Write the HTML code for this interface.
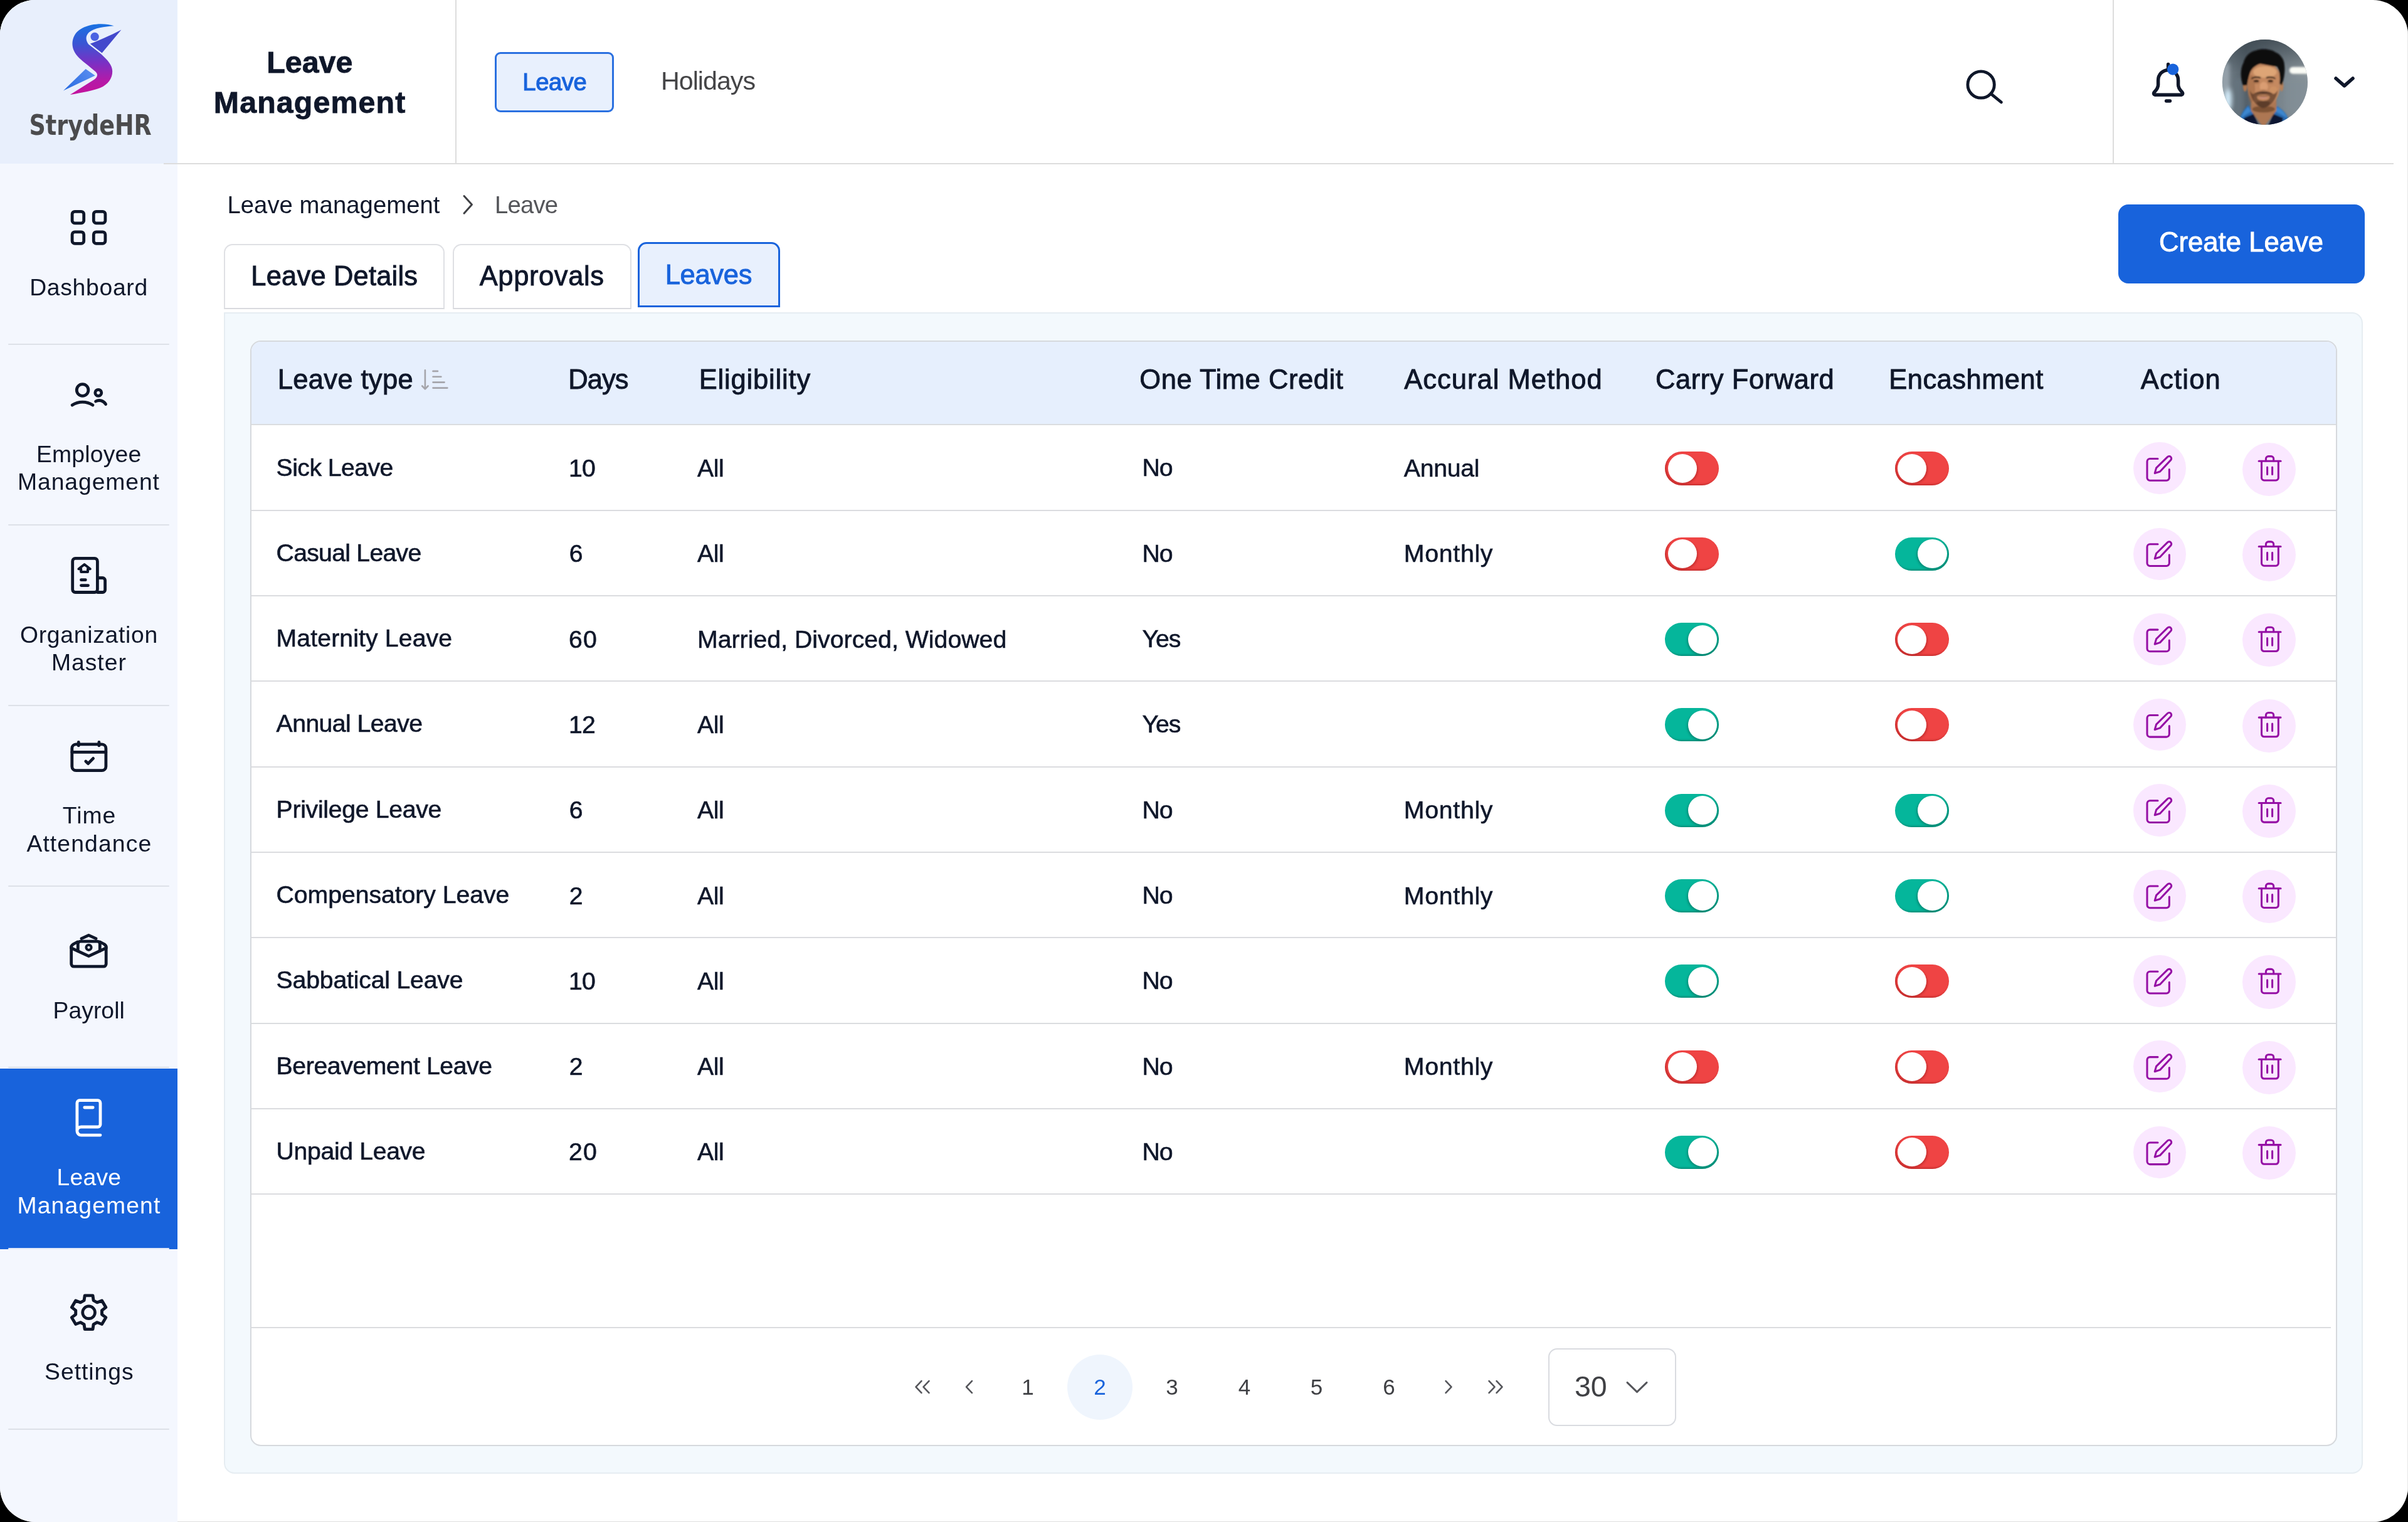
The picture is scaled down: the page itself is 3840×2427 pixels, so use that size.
<!DOCTYPE html>
<html lang="en"><head><meta charset="utf-8"><title>Leave Management</title>
<style>
*{box-sizing:border-box;margin:0;padding:0}
html,body{width:3840px;height:2427px;background:#000;overflow:hidden}
body{font-family:"Liberation Sans", sans-serif;-webkit-font-smoothing:antialiased}
#app{will-change:transform;position:absolute;left:0;top:0;width:3840px;height:2427px;background:#fff;border-radius:56px;overflow:hidden}
</style></head><body><div id="app">
<div style="position:absolute;left:0px;top:0px;width:283px;height:2427px;background:#f4f7fe;"></div>
<div style="position:absolute;left:0px;top:0px;width:283px;height:261px;background:#e8effc;"></div>
<div style="position:absolute;left:13px;top:1701px;width:257px;height:2px;background:#dde1e8;border-radius:1px;"></div>
<div style="position:absolute;left:0px;top:1703.5px;width:283px;height:288.5px;background:#1863dc;"></div>
<div style="position:absolute;left:13px;top:548px;width:257px;height:2px;background:#dde1e8;border-radius:1px;"></div>
<div style="position:absolute;left:13px;top:836px;width:257px;height:2px;background:#dde1e8;border-radius:1px;"></div>
<div style="position:absolute;left:13px;top:1124px;width:257px;height:2px;background:#dde1e8;border-radius:1px;"></div>
<div style="position:absolute;left:13px;top:1412px;width:257px;height:2px;background:#dde1e8;border-radius:1px;"></div>
<div style="position:absolute;left:13px;top:1989.5px;width:257px;height:2px;background:#e3eaf9;border-radius:1px;"></div>
<div style="position:absolute;left:13px;top:2278px;width:257px;height:2px;background:#dde1e8;border-radius:1px;"></div>
<div style="position:absolute;left:47.20px;top:435.50px;font-size:37.3px;line-height:44.76px;color:#0f172a;font-weight:400;white-space:nowrap;letter-spacing:0.691px;">Dashboard</div>
<div style="position:absolute;left:57.90px;top:701.50px;font-size:37.3px;line-height:44.76px;color:#0f172a;font-weight:400;white-space:nowrap;letter-spacing:0.218px;">Employee</div>
<div style="position:absolute;left:28.00px;top:746.10px;font-size:37.3px;line-height:44.76px;color:#0f172a;font-weight:400;white-space:nowrap;letter-spacing:0.920px;">Management</div>
<div style="position:absolute;left:32.00px;top:989.60px;font-size:37.3px;line-height:44.76px;color:#0f172a;font-weight:400;white-space:nowrap;letter-spacing:0.701px;">Organization</div>
<div style="position:absolute;left:81.90px;top:1034.20px;font-size:37.3px;line-height:44.76px;color:#0f172a;font-weight:400;white-space:nowrap;letter-spacing:1.002px;">Master</div>
<div style="position:absolute;left:99.80px;top:1277.90px;font-size:37.3px;line-height:44.76px;color:#0f172a;font-weight:400;white-space:nowrap;letter-spacing:0.967px;">Time</div>
<div style="position:absolute;left:42.40px;top:1322.50px;font-size:37.3px;line-height:44.76px;color:#0f172a;font-weight:400;white-space:nowrap;letter-spacing:1.118px;">Attendance</div>
<div style="position:absolute;left:84.50px;top:1588.80px;font-size:37.3px;line-height:44.76px;color:#0f172a;font-weight:400;white-space:nowrap;letter-spacing:0.046px;">Payroll</div>
<div style="position:absolute;left:90.50px;top:1855.30px;font-size:37.3px;line-height:44.76px;color:#fff;font-weight:400;white-space:nowrap;letter-spacing:0.239px;">Leave</div>
<div style="position:absolute;left:27.50px;top:1899.90px;font-size:37.3px;line-height:44.76px;color:#fff;font-weight:400;white-space:nowrap;letter-spacing:1.120px;">Management</div>
<div style="position:absolute;left:71.10px;top:2164.70px;font-size:37.3px;line-height:44.76px;color:#0f172a;font-weight:400;white-space:nowrap;letter-spacing:0.976px;">Settings</div>
<div style="position:absolute;left:143.9px;top:173.21px;font-size:45px;line-height:54px;color:#4b4b4d;font-weight:700;white-space:nowrap;transform:translateX(-50%) scaleX(.902);font-family:'DejaVu Sans Condensed','DejaVu Sans',sans-serif;font-stretch:condensed;">StrydeHR</div>
<div style="position:absolute;left:283px;top:2426px;width:3557px;height:1px;background:#dedede;"></div>
<div style="position:absolute;left:3839px;top:0px;width:1px;height:2427px;background:#e6e6e6;"></div>
<div style="position:absolute;left:261px;top:260px;width:3556px;height:2px;background:#dddddd;"></div>
<div style="position:absolute;left:726px;top:0px;width:2px;height:261px;background:#dddddd;"></div>
<div style="position:absolute;left:3369px;top:0px;width:2px;height:261px;background:#dddddd;"></div>
<div style="position:absolute;left:425.30px;top:69.79px;font-size:48.4px;line-height:58.08px;color:#0f172a;font-weight:700;white-space:nowrap;-webkit-text-stroke:0.8px #0f172a;letter-spacing:-0.053px;">Leave</div>
<div style="position:absolute;left:340.80px;top:134.39px;font-size:48.4px;line-height:58.08px;color:#0f172a;font-weight:700;white-space:nowrap;-webkit-text-stroke:0.8px #0f172a;letter-spacing:1.087px;">Management</div>
<div style="position:absolute;left:789px;top:83px;width:190px;height:96px;background:#e8f0fd;border:3px solid #2a70e0;border-radius:9px;"></div>
<div style="position:absolute;left:833.35px;top:108.34px;font-size:38.2px;line-height:45.84px;color:#1863dc;font-weight:400;white-space:nowrap;-webkit-text-stroke:1.1px #1863dc;letter-spacing:-0.424px;">Leave</div>
<div style="position:absolute;left:1054.05px;top:105.40px;font-size:41.2px;line-height:49.44px;color:#454547;font-weight:400;white-space:nowrap;letter-spacing:-1.000px;">Holidays</div>
<div style="position:absolute;left:362.40px;top:303.55px;font-size:38.3px;line-height:45.96px;color:#0f172a;font-weight:400;white-space:nowrap;letter-spacing:0.038px;">Leave management</div>
<div style="position:absolute;left:789.10px;top:303.55px;font-size:38.3px;line-height:45.96px;color:#55565a;font-weight:400;white-space:nowrap;letter-spacing:-0.842px;">Leave</div>
<div style="position:absolute;left:357px;top:388.5px;width:352px;height:104px;background:#fff;border:2px solid #dfe0e4;border-bottom-color:#d9dade;border-radius:14px 14px 0 0;"></div>
<div style="position:absolute;left:721.5px;top:388.5px;width:285.5px;height:104px;background:#fff;border:2px solid #dfe0e4;border-bottom-color:#d9dade;border-radius:14px 14px 0 0;"></div>
<div style="position:absolute;left:1017px;top:385.5px;width:226.5px;height:104.5px;background:#e8f0fd;border:3px solid #1863dc;border-radius:14px 14px 0 0;"></div>
<div style="position:absolute;left:400.35px;top:414.43px;font-size:43.5px;line-height:52.2px;color:#0f172a;font-weight:400;white-space:nowrap;-webkit-text-stroke:0.9px #0f172a;letter-spacing:0.178px;">Leave Details</div>
<div style="position:absolute;left:764.75px;top:414.43px;font-size:43.5px;line-height:52.2px;color:#0f172a;font-weight:400;white-space:nowrap;-webkit-text-stroke:0.9px #0f172a;letter-spacing:0.607px;">Approvals</div>
<div style="position:absolute;left:1060.65px;top:412.43px;font-size:43.5px;line-height:52.2px;color:#1863dc;font-weight:400;white-space:nowrap;-webkit-text-stroke:0.9px #1863dc;letter-spacing:-0.297px;">Leaves</div>
<div style="position:absolute;left:3378px;top:326px;width:392.5px;height:125.5px;background:#1863dc;border-radius:16px;"></div>
<div style="position:absolute;left:3442.95px;top:359.73px;font-size:43.6px;line-height:52.32px;color:#fff;font-weight:400;white-space:nowrap;-webkit-text-stroke:0.9px #fff;letter-spacing:0.039px;">Create Leave</div>
<div style="position:absolute;left:357px;top:498px;width:3411px;height:1852px;background:#f3f9fd;border:2px solid #e6edf2;border-radius:0 17px 17px 17px;"></div>
<div style="position:absolute;left:399px;top:542.5px;width:3327.5px;height:1763.5px;background:#fff;border:2px solid #d6d9dd;border-radius:17px;overflow:hidden;"></div>
<div style="position:absolute;left:401px;top:544.5px;width:3323.5px;height:133px;background:#e6effd;border-radius:15px 15px 0 0;"></div>
<div style="position:absolute;left:401px;top:676px;width:3323.5px;height:2px;background:#dbdcdf;"></div>
<div style="position:absolute;left:401px;top:813px;width:3323.5px;height:2px;background:#dbdcdf;"></div>
<div style="position:absolute;left:401px;top:949px;width:3323.5px;height:2px;background:#dbdcdf;"></div>
<div style="position:absolute;left:401px;top:1085px;width:3323.5px;height:2px;background:#dbdcdf;"></div>
<div style="position:absolute;left:401px;top:1222px;width:3323.5px;height:2px;background:#dbdcdf;"></div>
<div style="position:absolute;left:401px;top:1358px;width:3323.5px;height:2px;background:#dbdcdf;"></div>
<div style="position:absolute;left:401px;top:1494px;width:3323.5px;height:2px;background:#dbdcdf;"></div>
<div style="position:absolute;left:401px;top:1631px;width:3323.5px;height:2px;background:#dbdcdf;"></div>
<div style="position:absolute;left:401px;top:1767px;width:3323.5px;height:2px;background:#dbdcdf;"></div>
<div style="position:absolute;left:401px;top:1903px;width:3323.5px;height:2px;background:#dbdcdf;"></div>
<div style="position:absolute;left:401px;top:2115.5px;width:3316px;height:2px;background:#dbdcdf;"></div>
<div style="position:absolute;left:442.65px;top:579.33px;font-size:43.5px;line-height:52.2px;color:#0f172a;font-weight:400;white-space:nowrap;-webkit-text-stroke:0.9px #0f172a;letter-spacing:0.362px;">Leave type</div>
<div style="position:absolute;left:906.15px;top:579.33px;font-size:43.5px;line-height:52.2px;color:#0f172a;font-weight:400;white-space:nowrap;-webkit-text-stroke:0.9px #0f172a;letter-spacing:-0.898px;">Days</div>
<div style="position:absolute;left:1114.65px;top:579.33px;font-size:43.5px;line-height:52.2px;color:#0f172a;font-weight:400;white-space:nowrap;-webkit-text-stroke:0.9px #0f172a;letter-spacing:0.838px;">Eligibility</div>
<div style="position:absolute;left:1817.25px;top:579.33px;font-size:43.5px;line-height:52.2px;color:#0f172a;font-weight:400;white-space:nowrap;-webkit-text-stroke:0.9px #0f172a;letter-spacing:0.559px;">One Time Credit</div>
<div style="position:absolute;left:2239.25px;top:579.33px;font-size:43.5px;line-height:52.2px;color:#0f172a;font-weight:400;white-space:nowrap;-webkit-text-stroke:0.9px #0f172a;letter-spacing:1.020px;">Accural Method</div>
<div style="position:absolute;left:2639.95px;top:579.33px;font-size:43.5px;line-height:52.2px;color:#0f172a;font-weight:400;white-space:nowrap;-webkit-text-stroke:0.9px #0f172a;letter-spacing:0.570px;">Carry Forward</div>
<div style="position:absolute;left:3012.25px;top:579.33px;font-size:43.5px;line-height:52.2px;color:#0f172a;font-weight:400;white-space:nowrap;-webkit-text-stroke:0.9px #0f172a;letter-spacing:0.465px;">Encashment</div>
<div style="position:absolute;left:3413.65px;top:579.33px;font-size:43.5px;line-height:52.2px;color:#0f172a;font-weight:400;white-space:nowrap;-webkit-text-stroke:0.9px #0f172a;letter-spacing:1.243px;">Action</div>
<div style="position:absolute;left:440.60px;top:721.50px;font-size:39.2px;line-height:47.04px;color:#0f172a;font-weight:400;white-space:nowrap;-webkit-text-stroke:0.6px #0f172a;letter-spacing:-0.552px;">Sick Leave</div>
<div style="position:absolute;left:907.10px;top:723.00px;font-size:39.2px;line-height:47.04px;color:#0f172a;font-weight:400;white-space:nowrap;-webkit-text-stroke:0.6px #0f172a;letter-spacing:-1.000px;">10</div>
<div style="position:absolute;left:1112.00px;top:723.00px;font-size:39.2px;line-height:47.04px;color:#0f172a;font-weight:400;white-space:nowrap;-webkit-text-stroke:0.6px #0f172a;letter-spacing:-0.426px;">All</div>
<div style="position:absolute;left:1821.40px;top:722.40px;font-size:39.2px;line-height:47.04px;color:#0f172a;font-weight:400;white-space:nowrap;-webkit-text-stroke:0.6px #0f172a;letter-spacing:-1.000px;">No</div>
<div style="position:absolute;left:2238.80px;top:723.00px;font-size:39.2px;line-height:47.04px;color:#0f172a;font-weight:400;white-space:nowrap;-webkit-text-stroke:0.6px #0f172a;letter-spacing:-0.294px;">Annual</div>
<div style="position:absolute;left:2655.1px;top:720.4px;width:86.4px;height:53.2px;border-radius:27px;background:#ef4444;box-shadow:inset 2px -2px 3px rgba(150,20,20,.45);"><div style="position:absolute;left:4.6px;top:3.5px;width:46.2px;height:46.2px;border-radius:50%;background:#fff;box-shadow:2px 2px 3px rgba(140,20,20,.35);"></div></div>
<div style="position:absolute;left:3021.6px;top:720.4px;width:86.4px;height:53.2px;border-radius:27px;background:#ef4444;box-shadow:inset 2px -2px 3px rgba(150,20,20,.45);"><div style="position:absolute;left:4.6px;top:3.5px;width:46.2px;height:46.2px;border-radius:50%;background:#fff;box-shadow:2px 2px 3px rgba(140,20,20,.35);"></div></div>
<div style="position:absolute;left:3402.4px;top:705.1999999999999px;width:83.2px;height:83.2px;background:#fae8ff;border-radius:50%;"></div>
<div style="position:absolute;left:3576.1px;top:705.6px;width:85.2px;height:85.2px;background:#fae8ff;border-radius:50%;"></div>
<div style="position:absolute;left:440.60px;top:857.80px;font-size:39.2px;line-height:47.04px;color:#0f172a;font-weight:400;white-space:nowrap;-webkit-text-stroke:0.6px #0f172a;letter-spacing:-0.728px;">Casual Leave</div>
<div style="position:absolute;left:907.80px;top:859.30px;font-size:39.2px;line-height:47.04px;color:#0f172a;font-weight:400;white-space:nowrap;-webkit-text-stroke:0.6px #0f172a;">6</div>
<div style="position:absolute;left:1112.00px;top:859.30px;font-size:39.2px;line-height:47.04px;color:#0f172a;font-weight:400;white-space:nowrap;-webkit-text-stroke:0.6px #0f172a;letter-spacing:-0.426px;">All</div>
<div style="position:absolute;left:1821.40px;top:858.70px;font-size:39.2px;line-height:47.04px;color:#0f172a;font-weight:400;white-space:nowrap;-webkit-text-stroke:0.6px #0f172a;letter-spacing:-1.000px;">No</div>
<div style="position:absolute;left:2238.80px;top:859.30px;font-size:39.2px;line-height:47.04px;color:#0f172a;font-weight:400;white-space:nowrap;-webkit-text-stroke:0.6px #0f172a;letter-spacing:0.743px;">Monthly</div>
<div style="position:absolute;left:2655.1px;top:856.7px;width:86.4px;height:53.2px;border-radius:27px;background:#ef4444;box-shadow:inset 2px -2px 3px rgba(150,20,20,.45);"><div style="position:absolute;left:4.6px;top:3.5px;width:46.2px;height:46.2px;border-radius:50%;background:#fff;box-shadow:2px 2px 3px rgba(140,20,20,.35);"></div></div>
<div style="position:absolute;left:3021.6px;top:856.7px;width:86.4px;height:53.2px;border-radius:27px;background:#05b69b;box-shadow:inset -2px -2px 3px rgba(0,90,75,.45);"><div style="position:absolute;right:3.4px;top:3.5px;width:46.2px;height:46.2px;border-radius:50%;background:#fff;box-shadow:-2px 2px 3px rgba(0,80,70,.35);"></div></div>
<div style="position:absolute;left:3402.4px;top:841.4999999999999px;width:83.2px;height:83.2px;background:#fae8ff;border-radius:50%;"></div>
<div style="position:absolute;left:3576.1px;top:841.9px;width:85.2px;height:85.2px;background:#fae8ff;border-radius:50%;"></div>
<div style="position:absolute;left:440.60px;top:994.10px;font-size:39.2px;line-height:47.04px;color:#0f172a;font-weight:400;white-space:nowrap;-webkit-text-stroke:0.6px #0f172a;letter-spacing:0.121px;">Maternity Leave</div>
<div style="position:absolute;left:907.10px;top:995.60px;font-size:39.2px;line-height:47.04px;color:#0f172a;font-weight:400;white-space:nowrap;-webkit-text-stroke:0.6px #0f172a;letter-spacing:1.210px;">60</div>
<div style="position:absolute;left:1112.00px;top:995.60px;font-size:39.2px;line-height:47.04px;color:#0f172a;font-weight:400;white-space:nowrap;-webkit-text-stroke:0.6px #0f172a;letter-spacing:0.042px;">Married, Divorced, Widowed</div>
<div style="position:absolute;left:1821.40px;top:995.00px;font-size:39.2px;line-height:47.04px;color:#0f172a;font-weight:400;white-space:nowrap;-webkit-text-stroke:0.6px #0f172a;letter-spacing:-1.000px;">Yes</div>
<div style="position:absolute;left:2655.1px;top:993.0px;width:86.4px;height:53.2px;border-radius:27px;background:#05b69b;box-shadow:inset -2px -2px 3px rgba(0,90,75,.45);"><div style="position:absolute;right:3.4px;top:3.5px;width:46.2px;height:46.2px;border-radius:50%;background:#fff;box-shadow:-2px 2px 3px rgba(0,80,70,.35);"></div></div>
<div style="position:absolute;left:3021.6px;top:993.0px;width:86.4px;height:53.2px;border-radius:27px;background:#ef4444;box-shadow:inset 2px -2px 3px rgba(150,20,20,.45);"><div style="position:absolute;left:4.6px;top:3.5px;width:46.2px;height:46.2px;border-radius:50%;background:#fff;box-shadow:2px 2px 3px rgba(140,20,20,.35);"></div></div>
<div style="position:absolute;left:3402.4px;top:977.8px;width:83.2px;height:83.2px;background:#fae8ff;border-radius:50%;"></div>
<div style="position:absolute;left:3576.1px;top:978.2px;width:85.2px;height:85.2px;background:#fae8ff;border-radius:50%;"></div>
<div style="position:absolute;left:440.60px;top:1130.40px;font-size:39.2px;line-height:47.04px;color:#0f172a;font-weight:400;white-space:nowrap;-webkit-text-stroke:0.6px #0f172a;letter-spacing:-0.568px;">Annual Leave</div>
<div style="position:absolute;left:907.10px;top:1131.90px;font-size:39.2px;line-height:47.04px;color:#0f172a;font-weight:400;white-space:nowrap;-webkit-text-stroke:0.6px #0f172a;letter-spacing:-1.000px;">12</div>
<div style="position:absolute;left:1112.00px;top:1131.90px;font-size:39.2px;line-height:47.04px;color:#0f172a;font-weight:400;white-space:nowrap;-webkit-text-stroke:0.6px #0f172a;letter-spacing:-0.426px;">All</div>
<div style="position:absolute;left:1821.40px;top:1131.30px;font-size:39.2px;line-height:47.04px;color:#0f172a;font-weight:400;white-space:nowrap;-webkit-text-stroke:0.6px #0f172a;letter-spacing:-1.000px;">Yes</div>
<div style="position:absolute;left:2655.1px;top:1129.3px;width:86.4px;height:53.2px;border-radius:27px;background:#05b69b;box-shadow:inset -2px -2px 3px rgba(0,90,75,.45);"><div style="position:absolute;right:3.4px;top:3.5px;width:46.2px;height:46.2px;border-radius:50%;background:#fff;box-shadow:-2px 2px 3px rgba(0,80,70,.35);"></div></div>
<div style="position:absolute;left:3021.6px;top:1129.3px;width:86.4px;height:53.2px;border-radius:27px;background:#ef4444;box-shadow:inset 2px -2px 3px rgba(150,20,20,.45);"><div style="position:absolute;left:4.6px;top:3.5px;width:46.2px;height:46.2px;border-radius:50%;background:#fff;box-shadow:2px 2px 3px rgba(140,20,20,.35);"></div></div>
<div style="position:absolute;left:3402.4px;top:1114.1000000000001px;width:83.2px;height:83.2px;background:#fae8ff;border-radius:50%;"></div>
<div style="position:absolute;left:3576.1px;top:1114.5000000000002px;width:85.2px;height:85.2px;background:#fae8ff;border-radius:50%;"></div>
<div style="position:absolute;left:440.60px;top:1266.70px;font-size:39.2px;line-height:47.04px;color:#0f172a;font-weight:400;white-space:nowrap;-webkit-text-stroke:0.6px #0f172a;letter-spacing:-0.294px;">Privilege Leave</div>
<div style="position:absolute;left:907.80px;top:1268.20px;font-size:39.2px;line-height:47.04px;color:#0f172a;font-weight:400;white-space:nowrap;-webkit-text-stroke:0.6px #0f172a;">6</div>
<div style="position:absolute;left:1112.00px;top:1268.20px;font-size:39.2px;line-height:47.04px;color:#0f172a;font-weight:400;white-space:nowrap;-webkit-text-stroke:0.6px #0f172a;letter-spacing:-0.426px;">All</div>
<div style="position:absolute;left:1821.40px;top:1267.60px;font-size:39.2px;line-height:47.04px;color:#0f172a;font-weight:400;white-space:nowrap;-webkit-text-stroke:0.6px #0f172a;letter-spacing:-1.000px;">No</div>
<div style="position:absolute;left:2238.80px;top:1268.20px;font-size:39.2px;line-height:47.04px;color:#0f172a;font-weight:400;white-space:nowrap;-webkit-text-stroke:0.6px #0f172a;letter-spacing:0.743px;">Monthly</div>
<div style="position:absolute;left:2655.1px;top:1265.6px;width:86.4px;height:53.2px;border-radius:27px;background:#05b69b;box-shadow:inset -2px -2px 3px rgba(0,90,75,.45);"><div style="position:absolute;right:3.4px;top:3.5px;width:46.2px;height:46.2px;border-radius:50%;background:#fff;box-shadow:-2px 2px 3px rgba(0,80,70,.35);"></div></div>
<div style="position:absolute;left:3021.6px;top:1265.6px;width:86.4px;height:53.2px;border-radius:27px;background:#05b69b;box-shadow:inset -2px -2px 3px rgba(0,90,75,.45);"><div style="position:absolute;right:3.4px;top:3.5px;width:46.2px;height:46.2px;border-radius:50%;background:#fff;box-shadow:-2px 2px 3px rgba(0,80,70,.35);"></div></div>
<div style="position:absolute;left:3402.4px;top:1250.4px;width:83.2px;height:83.2px;background:#fae8ff;border-radius:50%;"></div>
<div style="position:absolute;left:3576.1px;top:1250.8000000000002px;width:85.2px;height:85.2px;background:#fae8ff;border-radius:50%;"></div>
<div style="position:absolute;left:440.60px;top:1403.00px;font-size:39.2px;line-height:47.04px;color:#0f172a;font-weight:400;white-space:nowrap;-webkit-text-stroke:0.6px #0f172a;letter-spacing:-0.047px;">Compensatory Leave</div>
<div style="position:absolute;left:907.80px;top:1404.50px;font-size:39.2px;line-height:47.04px;color:#0f172a;font-weight:400;white-space:nowrap;-webkit-text-stroke:0.6px #0f172a;">2</div>
<div style="position:absolute;left:1112.00px;top:1404.50px;font-size:39.2px;line-height:47.04px;color:#0f172a;font-weight:400;white-space:nowrap;-webkit-text-stroke:0.6px #0f172a;letter-spacing:-0.426px;">All</div>
<div style="position:absolute;left:1821.40px;top:1403.90px;font-size:39.2px;line-height:47.04px;color:#0f172a;font-weight:400;white-space:nowrap;-webkit-text-stroke:0.6px #0f172a;letter-spacing:-1.000px;">No</div>
<div style="position:absolute;left:2238.80px;top:1404.50px;font-size:39.2px;line-height:47.04px;color:#0f172a;font-weight:400;white-space:nowrap;-webkit-text-stroke:0.6px #0f172a;letter-spacing:0.743px;">Monthly</div>
<div style="position:absolute;left:2655.1px;top:1401.9px;width:86.4px;height:53.2px;border-radius:27px;background:#05b69b;box-shadow:inset -2px -2px 3px rgba(0,90,75,.45);"><div style="position:absolute;right:3.4px;top:3.5px;width:46.2px;height:46.2px;border-radius:50%;background:#fff;box-shadow:-2px 2px 3px rgba(0,80,70,.35);"></div></div>
<div style="position:absolute;left:3021.6px;top:1401.9px;width:86.4px;height:53.2px;border-radius:27px;background:#05b69b;box-shadow:inset -2px -2px 3px rgba(0,90,75,.45);"><div style="position:absolute;right:3.4px;top:3.5px;width:46.2px;height:46.2px;border-radius:50%;background:#fff;box-shadow:-2px 2px 3px rgba(0,80,70,.35);"></div></div>
<div style="position:absolute;left:3402.4px;top:1386.7px;width:83.2px;height:83.2px;background:#fae8ff;border-radius:50%;"></div>
<div style="position:absolute;left:3576.1px;top:1387.1000000000001px;width:85.2px;height:85.2px;background:#fae8ff;border-radius:50%;"></div>
<div style="position:absolute;left:440.60px;top:1539.30px;font-size:39.2px;line-height:47.04px;color:#0f172a;font-weight:400;white-space:nowrap;-webkit-text-stroke:0.6px #0f172a;letter-spacing:-0.183px;">Sabbatical Leave</div>
<div style="position:absolute;left:907.10px;top:1540.80px;font-size:39.2px;line-height:47.04px;color:#0f172a;font-weight:400;white-space:nowrap;-webkit-text-stroke:0.6px #0f172a;letter-spacing:-1.000px;">10</div>
<div style="position:absolute;left:1112.00px;top:1540.80px;font-size:39.2px;line-height:47.04px;color:#0f172a;font-weight:400;white-space:nowrap;-webkit-text-stroke:0.6px #0f172a;letter-spacing:-0.426px;">All</div>
<div style="position:absolute;left:1821.40px;top:1540.20px;font-size:39.2px;line-height:47.04px;color:#0f172a;font-weight:400;white-space:nowrap;-webkit-text-stroke:0.6px #0f172a;letter-spacing:-1.000px;">No</div>
<div style="position:absolute;left:2655.1px;top:1538.2px;width:86.4px;height:53.2px;border-radius:27px;background:#05b69b;box-shadow:inset -2px -2px 3px rgba(0,90,75,.45);"><div style="position:absolute;right:3.4px;top:3.5px;width:46.2px;height:46.2px;border-radius:50%;background:#fff;box-shadow:-2px 2px 3px rgba(0,80,70,.35);"></div></div>
<div style="position:absolute;left:3021.6px;top:1538.2px;width:86.4px;height:53.2px;border-radius:27px;background:#ef4444;box-shadow:inset 2px -2px 3px rgba(150,20,20,.45);"><div style="position:absolute;left:4.6px;top:3.5px;width:46.2px;height:46.2px;border-radius:50%;background:#fff;box-shadow:2px 2px 3px rgba(140,20,20,.35);"></div></div>
<div style="position:absolute;left:3402.4px;top:1523.0000000000002px;width:83.2px;height:83.2px;background:#fae8ff;border-radius:50%;"></div>
<div style="position:absolute;left:3576.1px;top:1523.4000000000003px;width:85.2px;height:85.2px;background:#fae8ff;border-radius:50%;"></div>
<div style="position:absolute;left:440.60px;top:1675.60px;font-size:39.2px;line-height:47.04px;color:#0f172a;font-weight:400;white-space:nowrap;-webkit-text-stroke:0.6px #0f172a;letter-spacing:-0.390px;">Bereavement Leave</div>
<div style="position:absolute;left:907.80px;top:1677.10px;font-size:39.2px;line-height:47.04px;color:#0f172a;font-weight:400;white-space:nowrap;-webkit-text-stroke:0.6px #0f172a;">2</div>
<div style="position:absolute;left:1112.00px;top:1677.10px;font-size:39.2px;line-height:47.04px;color:#0f172a;font-weight:400;white-space:nowrap;-webkit-text-stroke:0.6px #0f172a;letter-spacing:-0.426px;">All</div>
<div style="position:absolute;left:1821.40px;top:1676.50px;font-size:39.2px;line-height:47.04px;color:#0f172a;font-weight:400;white-space:nowrap;-webkit-text-stroke:0.6px #0f172a;letter-spacing:-1.000px;">No</div>
<div style="position:absolute;left:2238.80px;top:1677.10px;font-size:39.2px;line-height:47.04px;color:#0f172a;font-weight:400;white-space:nowrap;-webkit-text-stroke:0.6px #0f172a;letter-spacing:0.743px;">Monthly</div>
<div style="position:absolute;left:2655.1px;top:1674.5px;width:86.4px;height:53.2px;border-radius:27px;background:#ef4444;box-shadow:inset 2px -2px 3px rgba(150,20,20,.45);"><div style="position:absolute;left:4.6px;top:3.5px;width:46.2px;height:46.2px;border-radius:50%;background:#fff;box-shadow:2px 2px 3px rgba(140,20,20,.35);"></div></div>
<div style="position:absolute;left:3021.6px;top:1674.5px;width:86.4px;height:53.2px;border-radius:27px;background:#ef4444;box-shadow:inset 2px -2px 3px rgba(150,20,20,.45);"><div style="position:absolute;left:4.6px;top:3.5px;width:46.2px;height:46.2px;border-radius:50%;background:#fff;box-shadow:2px 2px 3px rgba(140,20,20,.35);"></div></div>
<div style="position:absolute;left:3402.4px;top:1659.3000000000002px;width:83.2px;height:83.2px;background:#fae8ff;border-radius:50%;"></div>
<div style="position:absolute;left:3576.1px;top:1659.7000000000003px;width:85.2px;height:85.2px;background:#fae8ff;border-radius:50%;"></div>
<div style="position:absolute;left:440.60px;top:1811.90px;font-size:39.2px;line-height:47.04px;color:#0f172a;font-weight:400;white-space:nowrap;-webkit-text-stroke:0.6px #0f172a;letter-spacing:-0.346px;">Unpaid Leave</div>
<div style="position:absolute;left:907.10px;top:1813.40px;font-size:39.2px;line-height:47.04px;color:#0f172a;font-weight:400;white-space:nowrap;-webkit-text-stroke:0.6px #0f172a;letter-spacing:1.210px;">20</div>
<div style="position:absolute;left:1112.00px;top:1813.40px;font-size:39.2px;line-height:47.04px;color:#0f172a;font-weight:400;white-space:nowrap;-webkit-text-stroke:0.6px #0f172a;letter-spacing:-0.426px;">All</div>
<div style="position:absolute;left:1821.40px;top:1812.80px;font-size:39.2px;line-height:47.04px;color:#0f172a;font-weight:400;white-space:nowrap;-webkit-text-stroke:0.6px #0f172a;letter-spacing:-1.000px;">No</div>
<div style="position:absolute;left:2655.1px;top:1810.8px;width:86.4px;height:53.2px;border-radius:27px;background:#05b69b;box-shadow:inset -2px -2px 3px rgba(0,90,75,.45);"><div style="position:absolute;right:3.4px;top:3.5px;width:46.2px;height:46.2px;border-radius:50%;background:#fff;box-shadow:-2px 2px 3px rgba(0,80,70,.35);"></div></div>
<div style="position:absolute;left:3021.6px;top:1810.8px;width:86.4px;height:53.2px;border-radius:27px;background:#ef4444;box-shadow:inset 2px -2px 3px rgba(150,20,20,.45);"><div style="position:absolute;left:4.6px;top:3.5px;width:46.2px;height:46.2px;border-radius:50%;background:#fff;box-shadow:2px 2px 3px rgba(140,20,20,.35);"></div></div>
<div style="position:absolute;left:3402.4px;top:1795.6000000000001px;width:83.2px;height:83.2px;background:#fae8ff;border-radius:50%;"></div>
<div style="position:absolute;left:3576.1px;top:1796.0000000000002px;width:85.2px;height:85.2px;background:#fae8ff;border-radius:50%;"></div>
<div style="position:absolute;left:1702px;top:2159.6px;width:104px;height:104px;background:#eff5fd;border-radius:50%;"></div>
<div style="position:absolute;left:1629.27px;top:2191.07px;font-size:35px;line-height:42.0px;color:#3f4044;font-weight:400;white-space:nowrap;">1</div>
<div style="position:absolute;left:1744.27px;top:2191.07px;font-size:35px;line-height:42.0px;color:#1863dc;font-weight:400;white-space:nowrap;">2</div>
<div style="position:absolute;left:1859.27px;top:2191.07px;font-size:35px;line-height:42.0px;color:#3f4044;font-weight:400;white-space:nowrap;">3</div>
<div style="position:absolute;left:1974.77px;top:2191.07px;font-size:35px;line-height:42.0px;color:#3f4044;font-weight:400;white-space:nowrap;">4</div>
<div style="position:absolute;left:2089.77px;top:2191.07px;font-size:35px;line-height:42.0px;color:#3f4044;font-weight:400;white-space:nowrap;">5</div>
<div style="position:absolute;left:2205.27px;top:2191.07px;font-size:35px;line-height:42.0px;color:#3f4044;font-weight:400;white-space:nowrap;">6</div>
<div style="position:absolute;left:2469px;top:2149.5px;width:204px;height:124px;background:#fff;border:2px solid #d9dbe0;border-radius:14px;"></div>
<div style="position:absolute;left:2511.00px;top:2183.59px;font-size:46.5px;line-height:55.8px;color:#3f4044;font-weight:400;white-space:nowrap;">30</div>
<svg style="position:absolute;left:0;top:0;pointer-events:none" width="3840" height="2427" viewBox="0 0 3840 2427" fill="none"><g stroke="#0f172a" stroke-width="4.8" stroke-linecap="round" stroke-linejoin="round" ><rect x="115.1" y="337.3" width="18.6" height="18.6" rx="4.2"/><rect x="115.1" y="369.8" width="18.6" height="18.6" rx="4.2"/><rect x="149.3" y="337.3" width="18.6" height="18.6" rx="4.2"/><rect x="149.3" y="369.8" width="18.6" height="18.6" rx="4.2"/></g><g stroke="#0f172a" stroke-width="4.8" stroke-linecap="round" stroke-linejoin="round" ><circle cx="131.6" cy="622" r="9.3"/><circle cx="156.8" cy="626.3" r="5"/><path d="M115.1 646 A29.7 29.7 0 0 1 148 646"/><path d="M152.6 640 C158 637 165 638.6 168.6 644.6"/></g><g stroke="#0f172a" stroke-width="4.8" stroke-linecap="round" stroke-linejoin="round" ><rect x="115.7" y="890.4" width="39.7" height="54.1" rx="4.5"/><path d="M155.4 921.5 H163.6 a4 4 0 0 1 4 4 V940.5 a4 4 0 0 1 -4 4 H155.4"/><path d="M129.5 924.7 H136.3 M129.5 933.6 H140.5"/></g><g stroke="#0f172a" stroke-width="4" stroke-linecap="round" stroke-linejoin="round" ><path d="M134.6 900 L143.8 907.3 H140 V911.9 H129.2 V907.3 H125.4 Z"/></g><g stroke="#0f172a" stroke-width="4.8" stroke-linecap="round" stroke-linejoin="round" ><rect x="114.8" y="1186.9" width="54.1" height="41.8" rx="6.5"/><path d="M125.3 1183.4 V1188.9 M157.9 1183.4 V1188.9 M114.8 1199.3 H168.9"/><path d="M136.8 1214 L140.5 1217.6 L148.6 1209.4"/></g><g stroke="#0f172a" stroke-width="4.8" stroke-linecap="round" stroke-linejoin="round" ><path d="M113.7 1510 V1537.1 a4 4 0 0 0 4 4 H165.2 a4 4 0 0 0 4 -4 V1510"/><path d="M113.7 1511.8 L141.5 1524.6 L169.2 1511.8"/><path d="M113.7 1510 C113.7 1507.5 115 1506.8 117 1505.5 L123.5 1502 M169.2 1510 C169.2 1507.5 168 1506.8 166 1505.5 L159.5 1502"/><path d="M130 1496.6 L141.4 1491.4 L153 1496.6"/><path d="M124.3 1516.4 V1505.1 a4 4 0 0 1 4 -4 H155.3 a4 4 0 0 1 4 4 V1516.4"/></g><g stroke="#0f172a" stroke-width="4" stroke-linecap="round" stroke-linejoin="round" ><circle cx="141.5" cy="1510.8" r="4.1"/></g><g stroke="#fff" stroke-width="4.8" stroke-linecap="round" stroke-linejoin="round" ><path d="M160 1810.1 H129.5 A6.55 6.55 0 0 1 122.9 1803.5 V1758.7 a4 4 0 0 1 4 -4 H156 a4 4 0 0 1 4 4 V1793 a4 4 0 0 1 -4 4 H129.5 A6.55 6.55 0 0 0 122.9 1803.5"/><path d="M134.8 1766 H148.2"/></g><g stroke="#0f172a" stroke-width="4.7" stroke-linecap="round" stroke-linejoin="round" ><g transform="translate(141.6 2092.8) scale(1.045 1.01) translate(-141.6 -2092.8)"><path d="M121.6 2096.0 L115.5 2100.8 L121.6 2111.4 L128.9 2108.5 L134.4 2111.7 L135.5 2119.4 L147.7 2119.4 L148.8 2111.7 L154.3 2108.5 L161.6 2111.4 L167.7 2100.8 L161.6 2096.0 L161.6 2089.6 L167.7 2084.8 L161.6 2074.2 L154.3 2077.1 L148.8 2073.9 L147.7 2066.2 L135.5 2066.2 L134.4 2073.9 L128.9 2077.1 L121.6 2074.2 L115.5 2084.8 L121.6 2089.6 Z"/></g><circle cx="141.6" cy="2092.8" r="9.9"/></g><g stroke="#0f172a" stroke-width="4.8" stroke-linecap="round" stroke-linejoin="round" ><circle cx="3159.1" cy="135" r="21.2"/><path d="M3175 149.6 L3191.4 163"/></g><g stroke="#0f172a" stroke-width="5.5" stroke-linecap="round" stroke-linejoin="round" ><path d="M3457.6 111.7 c-9.2 0 -16 7.2 -16 16.5 v7 c0 4.5 -2.2 7.5 -5.7 11.2 c-2.6 2.8 -1.2 4.8 2.2 4.8 h39 c3.4 0 4.8 -2 2.2 -4.8 c-3.5 -3.7 -5.7 -6.7 -5.7 -11.2 v-7 c0 -9.3 -6.8 -16.5 -16 -16.5 z"/><path d="M3457.6 102.6 V110 M3454.6 161 H3460.4"/></g><circle cx="3465.1" cy="110.6" r="9.2" fill="#1863dc"/><g stroke="#0f172a" stroke-width="5.5" stroke-linecap="round" stroke-linejoin="round" ><path d="M3725 125 L3738.5 136.9 L3752 125"/></g><g stroke="#3f4044" stroke-width="3" stroke-linecap="round" stroke-linejoin="round" ><path d="M740 312.5 L752.5 326.3 L740 340.2"/></g><g stroke="#a5a5ab" stroke-width="2.6" stroke-linecap="round" stroke-linejoin="round" ><path d="M677.9 590.2 V620 M673.2 615.5 L677.9 620.3 L682.6 615.5"/><path d="M690.5 591.9 H698 M690.5 600.8 H703.4 M690.5 609.6 H708.6 M690.5 618.6 H713.4"/></g><g stroke="#55565b" stroke-width="2.6" stroke-linecap="round" stroke-linejoin="round" ><path d="M1469.5 2202.1 L1460.5 2211.6 L1469.5 2221.1 M1481.5 2202.1 L1472.5 2211.6 L1481.5 2221.1"/><path d="M1550 2202.1 L1541 2211.6 L1550 2221.1"/><path d="M2305.5 2202.1 L2314.5 2211.6 L2305.5 2221.1"/><path d="M2374.5 2202.1 L2383.5 2211.6 L2374.5 2221.1 M2386.5 2202.1 L2395.5 2211.6 L2386.5 2221.1"/></g><g stroke="#55565b" stroke-width="3" stroke-linecap="round" stroke-linejoin="round" ><path d="M2595 2204.6 L2610.5 2219.6 L2626 2204.6"/></g><g transform="translate(0.0 0.0)" stroke="#950fa5" stroke-width="3.05" stroke-linecap="round" stroke-linejoin="round"><path d="M3441 731.5 H3428.5 a4.5 4.5 0 0 0 -4.5 4.5 V761.7 a4.5 4.5 0 0 0 4.5 4.5 H3454.8 a4.5 4.5 0 0 0 4.5 -4.5 V748.5"/><path d="M3456.5 728.6 a3.6 3.6 0 0 1 5.2 5 L3444.5 752 L3436.2 754.6 L3438.6 746.2 Z"/></g><g transform="translate(0.0 0.0)" stroke="#950fa5" stroke-width="3.05" stroke-linecap="round" stroke-linejoin="round"><path d="M3602.2 735.2 H3637"/><path d="M3613.4 735 V731.6 a4 4 0 0 1 4 -4 H3621.7 a4 4 0 0 1 4 4 V735"/><path d="M3606.5 735.6 V761.9 a4 4 0 0 0 4 4 H3629.3 a4 4 0 0 0 4 -4 V735.6"/><path d="M3615.6 745 V756.5 M3623.6 745 V756.5"/></g><g transform="translate(0.0 136.3)" stroke="#950fa5" stroke-width="3.05" stroke-linecap="round" stroke-linejoin="round"><path d="M3441 731.5 H3428.5 a4.5 4.5 0 0 0 -4.5 4.5 V761.7 a4.5 4.5 0 0 0 4.5 4.5 H3454.8 a4.5 4.5 0 0 0 4.5 -4.5 V748.5"/><path d="M3456.5 728.6 a3.6 3.6 0 0 1 5.2 5 L3444.5 752 L3436.2 754.6 L3438.6 746.2 Z"/></g><g transform="translate(0.0 136.3)" stroke="#950fa5" stroke-width="3.05" stroke-linecap="round" stroke-linejoin="round"><path d="M3602.2 735.2 H3637"/><path d="M3613.4 735 V731.6 a4 4 0 0 1 4 -4 H3621.7 a4 4 0 0 1 4 4 V735"/><path d="M3606.5 735.6 V761.9 a4 4 0 0 0 4 4 H3629.3 a4 4 0 0 0 4 -4 V735.6"/><path d="M3615.6 745 V756.5 M3623.6 745 V756.5"/></g><g transform="translate(0.0 272.6)" stroke="#950fa5" stroke-width="3.05" stroke-linecap="round" stroke-linejoin="round"><path d="M3441 731.5 H3428.5 a4.5 4.5 0 0 0 -4.5 4.5 V761.7 a4.5 4.5 0 0 0 4.5 4.5 H3454.8 a4.5 4.5 0 0 0 4.5 -4.5 V748.5"/><path d="M3456.5 728.6 a3.6 3.6 0 0 1 5.2 5 L3444.5 752 L3436.2 754.6 L3438.6 746.2 Z"/></g><g transform="translate(0.0 272.6)" stroke="#950fa5" stroke-width="3.05" stroke-linecap="round" stroke-linejoin="round"><path d="M3602.2 735.2 H3637"/><path d="M3613.4 735 V731.6 a4 4 0 0 1 4 -4 H3621.7 a4 4 0 0 1 4 4 V735"/><path d="M3606.5 735.6 V761.9 a4 4 0 0 0 4 4 H3629.3 a4 4 0 0 0 4 -4 V735.6"/><path d="M3615.6 745 V756.5 M3623.6 745 V756.5"/></g><g transform="translate(0.0 408.9)" stroke="#950fa5" stroke-width="3.05" stroke-linecap="round" stroke-linejoin="round"><path d="M3441 731.5 H3428.5 a4.5 4.5 0 0 0 -4.5 4.5 V761.7 a4.5 4.5 0 0 0 4.5 4.5 H3454.8 a4.5 4.5 0 0 0 4.5 -4.5 V748.5"/><path d="M3456.5 728.6 a3.6 3.6 0 0 1 5.2 5 L3444.5 752 L3436.2 754.6 L3438.6 746.2 Z"/></g><g transform="translate(0.0 408.9)" stroke="#950fa5" stroke-width="3.05" stroke-linecap="round" stroke-linejoin="round"><path d="M3602.2 735.2 H3637"/><path d="M3613.4 735 V731.6 a4 4 0 0 1 4 -4 H3621.7 a4 4 0 0 1 4 4 V735"/><path d="M3606.5 735.6 V761.9 a4 4 0 0 0 4 4 H3629.3 a4 4 0 0 0 4 -4 V735.6"/><path d="M3615.6 745 V756.5 M3623.6 745 V756.5"/></g><g transform="translate(0.0 545.2)" stroke="#950fa5" stroke-width="3.05" stroke-linecap="round" stroke-linejoin="round"><path d="M3441 731.5 H3428.5 a4.5 4.5 0 0 0 -4.5 4.5 V761.7 a4.5 4.5 0 0 0 4.5 4.5 H3454.8 a4.5 4.5 0 0 0 4.5 -4.5 V748.5"/><path d="M3456.5 728.6 a3.6 3.6 0 0 1 5.2 5 L3444.5 752 L3436.2 754.6 L3438.6 746.2 Z"/></g><g transform="translate(0.0 545.2)" stroke="#950fa5" stroke-width="3.05" stroke-linecap="round" stroke-linejoin="round"><path d="M3602.2 735.2 H3637"/><path d="M3613.4 735 V731.6 a4 4 0 0 1 4 -4 H3621.7 a4 4 0 0 1 4 4 V735"/><path d="M3606.5 735.6 V761.9 a4 4 0 0 0 4 4 H3629.3 a4 4 0 0 0 4 -4 V735.6"/><path d="M3615.6 745 V756.5 M3623.6 745 V756.5"/></g><g transform="translate(0.0 681.5)" stroke="#950fa5" stroke-width="3.05" stroke-linecap="round" stroke-linejoin="round"><path d="M3441 731.5 H3428.5 a4.5 4.5 0 0 0 -4.5 4.5 V761.7 a4.5 4.5 0 0 0 4.5 4.5 H3454.8 a4.5 4.5 0 0 0 4.5 -4.5 V748.5"/><path d="M3456.5 728.6 a3.6 3.6 0 0 1 5.2 5 L3444.5 752 L3436.2 754.6 L3438.6 746.2 Z"/></g><g transform="translate(0.0 681.5)" stroke="#950fa5" stroke-width="3.05" stroke-linecap="round" stroke-linejoin="round"><path d="M3602.2 735.2 H3637"/><path d="M3613.4 735 V731.6 a4 4 0 0 1 4 -4 H3621.7 a4 4 0 0 1 4 4 V735"/><path d="M3606.5 735.6 V761.9 a4 4 0 0 0 4 4 H3629.3 a4 4 0 0 0 4 -4 V735.6"/><path d="M3615.6 745 V756.5 M3623.6 745 V756.5"/></g><g transform="translate(0.0 817.8)" stroke="#950fa5" stroke-width="3.05" stroke-linecap="round" stroke-linejoin="round"><path d="M3441 731.5 H3428.5 a4.5 4.5 0 0 0 -4.5 4.5 V761.7 a4.5 4.5 0 0 0 4.5 4.5 H3454.8 a4.5 4.5 0 0 0 4.5 -4.5 V748.5"/><path d="M3456.5 728.6 a3.6 3.6 0 0 1 5.2 5 L3444.5 752 L3436.2 754.6 L3438.6 746.2 Z"/></g><g transform="translate(0.0 817.8)" stroke="#950fa5" stroke-width="3.05" stroke-linecap="round" stroke-linejoin="round"><path d="M3602.2 735.2 H3637"/><path d="M3613.4 735 V731.6 a4 4 0 0 1 4 -4 H3621.7 a4 4 0 0 1 4 4 V735"/><path d="M3606.5 735.6 V761.9 a4 4 0 0 0 4 4 H3629.3 a4 4 0 0 0 4 -4 V735.6"/><path d="M3615.6 745 V756.5 M3623.6 745 V756.5"/></g><g transform="translate(0.0 954.1)" stroke="#950fa5" stroke-width="3.05" stroke-linecap="round" stroke-linejoin="round"><path d="M3441 731.5 H3428.5 a4.5 4.5 0 0 0 -4.5 4.5 V761.7 a4.5 4.5 0 0 0 4.5 4.5 H3454.8 a4.5 4.5 0 0 0 4.5 -4.5 V748.5"/><path d="M3456.5 728.6 a3.6 3.6 0 0 1 5.2 5 L3444.5 752 L3436.2 754.6 L3438.6 746.2 Z"/></g><g transform="translate(0.0 954.1)" stroke="#950fa5" stroke-width="3.05" stroke-linecap="round" stroke-linejoin="round"><path d="M3602.2 735.2 H3637"/><path d="M3613.4 735 V731.6 a4 4 0 0 1 4 -4 H3621.7 a4 4 0 0 1 4 4 V735"/><path d="M3606.5 735.6 V761.9 a4 4 0 0 0 4 4 H3629.3 a4 4 0 0 0 4 -4 V735.6"/><path d="M3615.6 745 V756.5 M3623.6 745 V756.5"/></g><g transform="translate(0.0 1090.4)" stroke="#950fa5" stroke-width="3.05" stroke-linecap="round" stroke-linejoin="round"><path d="M3441 731.5 H3428.5 a4.5 4.5 0 0 0 -4.5 4.5 V761.7 a4.5 4.5 0 0 0 4.5 4.5 H3454.8 a4.5 4.5 0 0 0 4.5 -4.5 V748.5"/><path d="M3456.5 728.6 a3.6 3.6 0 0 1 5.2 5 L3444.5 752 L3436.2 754.6 L3438.6 746.2 Z"/></g><g transform="translate(0.0 1090.4)" stroke="#950fa5" stroke-width="3.05" stroke-linecap="round" stroke-linejoin="round"><path d="M3602.2 735.2 H3637"/><path d="M3613.4 735 V731.6 a4 4 0 0 1 4 -4 H3621.7 a4 4 0 0 1 4 4 V735"/><path d="M3606.5 735.6 V761.9 a4 4 0 0 0 4 4 H3629.3 a4 4 0 0 0 4 -4 V735.6"/><path d="M3615.6 745 V756.5 M3623.6 745 V756.5"/></g><defs>
<linearGradient id="lgS" x1="0" y1="38" x2="0" y2="151" gradientUnits="userSpaceOnUse"><stop offset="0" stop-color="#1872e2"/><stop offset=".28" stop-color="#3a55d4"/><stop offset=".55" stop-color="#7a30c4"/><stop offset=".8" stop-color="#b41aa8"/><stop offset="1" stop-color="#c4129c"/></linearGradient>
<linearGradient id="lgL" x1="101" y1="145" x2="150" y2="112" gradientUnits="userSpaceOnUse"><stop offset="0" stop-color="#2468e0"/><stop offset="1" stop-color="#5c8ff0"/></linearGradient>
</defs>
<path fill="url(#lgS)" d="M181.8 41.2 C168 37 147 36.6 131 45 C117 52 112.5 67 117.5 80 C121 89 130 96 140 104 L152.6 114.5 C157 119 155 123.5 150 127 L111.8 151.1 C130 148 150 144 160 140 C172 135 179.5 125 179.2 113.5 C179 104 172 96 161 86 L141 70.5 C136.5 64 136 57 142 51.5 C150 44.5 166 42.5 181.8 41.2 Z"/>
<path fill="#4349cc" d="M143.8 69.8 C156 65.5 175 57 193.4 47.5 L162.6 84.4 Z"/>
<path fill="url(#lgL)" d="M136.6 110 L151.7 120.6 L101.1 144.6 Z"/>
<circle cx="151.1" cy="58.5" r="6.7" fill="#4a63e2"/><defs><clipPath id="avc"><circle cx="3611.9" cy="131" r="68.1"/></clipPath>
<linearGradient id="avbg" x1="130" y1="0" x2="1410" y2="0" gradientUnits="userSpaceOnUse"><stop offset="0" stop-color="#939fa6"/><stop offset=".1" stop-color="#6a7780"/><stop offset=".28" stop-color="#55616a"/><stop offset=".62" stop-color="#76828a"/><stop offset="1" stop-color="#8d979d"/></linearGradient>
<linearGradient id="avtop" x1="0" y1="100" x2="0" y2="620" gradientUnits="userSpaceOnUse"><stop offset="0" stop-color="#3c474f" stop-opacity=".85"/><stop offset="1" stop-color="#3c474f" stop-opacity="0"/></linearGradient>
<filter id="avb" x="-10%" y="-10%" width="120%" height="120%"><feGaussianBlur stdDeviation="11"/></filter>
<filter id="avb2" x="-30%" y="-30%" width="160%" height="160%"><feGaussianBlur stdDeviation="28"/></filter>
<filter id="avb3" x="-30%" y="-30%" width="160%" height="160%"><feGaussianBlur stdDeviation="14"/></filter></defs>
<g clip-path="url(#avc)"><g transform="translate(3530 50) scale(0.106428)">
<rect x="100" y="90" width="1340" height="1340" fill="url(#avbg)"/>
<rect x="100" y="90" width="1340" height="540" fill="url(#avtop)"/>
<g filter="url(#avb2)"><ellipse cx="215" cy="1020" rx="55" ry="190" fill="#d2eaf8"/><rect x="150" y="480" width="90" height="420" fill="#9fadb6" opacity=".7"/><rect x="300" y="700" width="140" height="600" fill="#66747e" opacity=".8"/><rect x="1080" y="700" width="330" height="500" fill="#808d96" opacity=".7"/></g>
<g filter="url(#avb3)"><rect x="1135" y="532" width="320" height="104" rx="52" fill="#fbfcf6"/></g>
<g filter="url(#avb)">
<path fill="#2b6cb2" d="M370 1440 L398 1292 C430 1200 480 1140 522 1108 L610 1250 L670 1440 Z M1140 1440 L1112 1292 C1080 1205 1000 1150 948 1118 L880 1250 L824 1440 Z"/>
<path fill="#4390d8" d="M405 1300 C440 1215 485 1160 520 1130 L560 1200 C510 1230 450 1270 405 1300 Z M1105 1300 C1070 1215 1010 1165 955 1135 L925 1200 C990 1230 1060 1270 1105 1300 Z" opacity=".75"/>
<path fill="#0f1830" d="M455 1296 L600 1236 L690 1440 L470 1440 Z M1040 1296 L894 1236 L806 1440 L1020 1440 Z"/>
<path fill="#ad7752" d="M560 980 L560 1190 L745 1440 L940 1190 L940 980 Z"/>
<ellipse cx="748" cy="1165" rx="170" ry="50" fill="#6f452d" opacity=".75"/>
<ellipse cx="471" cy="815" rx="31" ry="86" fill="#b27850"/><ellipse cx="1018" cy="820" rx="27" ry="80" fill="#b98158"/>
<path fill="#c58960" d="M505 700 C500 560 600 470 745 470 C890 470 1000 560 995 700 L990 860 C975 1010 870 1140 745 1146 C620 1140 520 1010 510 860 Z"/>
<ellipse cx="770" cy="610" rx="175" ry="85" fill="#e2aa7a" opacity=".85"/>
<ellipse cx="752" cy="830" rx="62" ry="72" fill="#dba074" opacity=".9"/>
<ellipse cx="900" cy="880" rx="60" ry="60" fill="#d29668" opacity=".6"/>
<ellipse cx="565" cy="860" rx="55" ry="210" fill="#9a6440" opacity=".5"/>
<path fill="#4a2f20" opacity=".62" fill-rule="evenodd" d="M540 880 C560 1040 650 1142 745 1148 C840 1142 940 1040 962 880 C935 930 900 950 880 930 C840 900 650 900 612 930 C590 950 560 930 540 880 Z M650 985 C650 1025 700 1040 745 1040 C790 1040 840 1025 840 985 C840 955 790 950 745 950 C700 950 650 955 650 985 Z"/>
<path fill="#3d271b" opacity=".5" d="M640 1060 C690 1040 800 1040 850 1060 C830 1120 790 1146 745 1148 C700 1146 660 1120 640 1060 Z"/>
<path fill="#33201a" d="M612 938 C660 888 832 888 878 938 C832 922 800 918 745 924 C690 918 658 922 612 938 Z"/>
<path fill="#5a2f24" d="M658 964 C710 984 782 984 832 964 C790 974 700 974 658 964 Z"/>
<ellipse cx="745" cy="996" rx="62" ry="15" fill="#cf9384" opacity=".75"/>
<path fill="#9a6644" opacity=".7" d="M700 880 C720 900 775 900 795 880 C780 870 715 870 700 880 Z"/>
<ellipse cx="640" cy="744" rx="40" ry="17" fill="#2a1911"/><ellipse cx="852" cy="744" rx="40" ry="17" fill="#2a1911"/>
<ellipse cx="640" cy="770" rx="46" ry="14" fill="#a06c49" opacity=".6"/><ellipse cx="852" cy="770" rx="46" ry="14" fill="#a06c49" opacity=".6"/>
<path fill="#17100c" d="M562 704 C600 670 672 668 708 690 L702 708 C660 690 610 694 568 718 Z M930 704 C892 670 820 668 784 690 L790 708 C832 690 882 694 924 718 Z"/>
<path fill="#0d0c0e" d="M442 810 C398 700 398 560 448 470 C468 380 540 300 640 284 C720 254 852 264 922 310 C1002 340 1062 420 1062 520 C1072 620 1052 720 1022 806 L988 786 C1000 700 992 600 952 527 C872 522 790 502 700 486 C620 510 560 562 540 642 C520 702 510 762 502 806 Z"/>
</g></g></g></svg>
</div></body></html>
